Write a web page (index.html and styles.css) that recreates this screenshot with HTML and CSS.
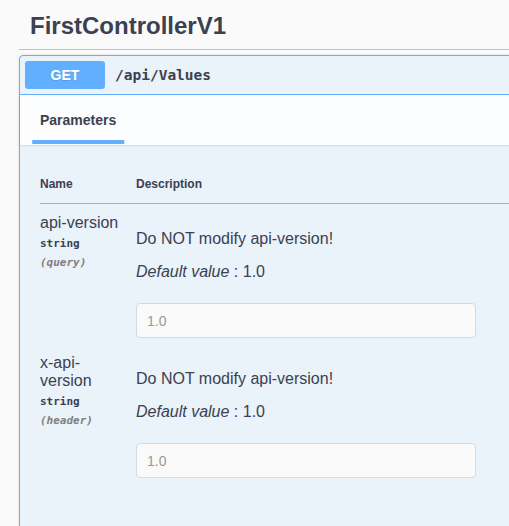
FILE: index.html
```html
<!DOCTYPE html>
<html lang="en">
<head>
<meta charset="utf-8">
<title>FirstControllerV1</title>
<link rel="stylesheet" href="styles.css">
</head>
<body>
<div class="wrapper">
  <div class="tag"><h3 class="tag-title">FirstControllerV1</h3></div>
  <div class="opblock">
    <div class="summary">
      <span class="method">GET</span>
      <span class="path">/api/Values</span>
    </div>
    <div class="section-header">
      <h4 class="tab"><span class="tab-label">Parameters</span></h4>
    </div>
    <div class="table-container">
      <table class="params">
        <thead>
          <tr><th class="col-name">Name</th><th class="col-desc">Description</th></tr>
        </thead>
        <tbody>
          <tr>
            <td class="col-name">
              <div class="p-name">api-version</div>
              <div class="p-type">string</div>
              <div class="p-in">(query)</div>
            </td>
            <td class="col-desc">
              <p class="desc">Do NOT modify api-version!</p>
              <p class="default"><i>Default value</i> : 1.0</p>
              <input class="p-input" type="text" value="1.0" disabled>
            </td>
          </tr>
          <tr>
            <td class="col-name">
              <div class="p-name">x-api-version</div>
              <div class="p-type">string</div>
              <div class="p-in">(header)</div>
            </td>
            <td class="col-desc">
              <p class="desc">Do NOT modify api-version!</p>
              <p class="default"><i>Default value</i> : 1.0</p>
              <input class="p-input" type="text" value="1.0" disabled>
            </td>
          </tr>
        </tbody>
      </table>
    </div>
  </div>
</div>
</body>
</html>
```

FILE: styles.css
```css
html, body {
  margin: 0;
  overflow: hidden;
}

body {
  background: #fafafa;
  font-family: "Liberation Sans", Arial, sans-serif;
  color: #3b4151;
}

.wrapper {
  width: 720px;
  padding: 0 0 0 19px;
}

.tag {
  padding: 11px 10px 8px 11px;
  border-bottom: 1px solid rgba(59, 65, 81, 0.3);
  margin-bottom: 5px;
}

.tag-title {
  margin: 0;
  font-size: 24px;
  line-height: 30px;
  font-weight: 700;
  color: #3b4151;
}

.opblock {
  border: 1px solid #61affe;
  border-radius: 4px;
  background: rgba(97, 175, 254, 0.1);
  box-shadow: 0 0 3px rgba(0, 0, 0, 0.12);
}

.summary {
  display: flex;
  align-items: center;
  padding: 5px;
  border-bottom: 1px solid #61affe;
}

.method {
  display: flex;
  align-items: center;
  justify-content: center;
  width: 80px;
  height: 28px;
  border-radius: 3px;
  background: #61affe;
  color: #fff;
  font-size: 14px;
  font-weight: 700;
  text-shadow: 0 1px 0 rgba(0, 0, 0, 0.1);
}

.path {
  margin-left: 10px;
  font-family: "DejaVu Sans Mono", "Liberation Mono", monospace;
  font-size: 14.5px;
  font-weight: 700;
  color: #3b4151;
}

.section-header {
  display: flex;
  align-items: center;
  box-sizing: border-box;
  min-height: 50px;
  padding: 0 20px;
  background: rgba(255, 255, 255, 0.8);
  box-shadow: 0 1px 2px rgba(0, 0, 0, 0.1);
}

.tab {
  margin: 0;
  font-size: 14px;
  line-height: 17px;
  font-weight: 700;
  color: #3b4151;
}

.tab-label {
  position: relative;
  display: inline-block;
}

.tab-label::after {
  content: "";
  position: absolute;
  left: 50%;
  bottom: -15px;
  width: 120%;
  height: 4px;
  transform: translateX(-50%);
  background: #61affe;
}

.table-container {
  padding: 20px 20px 80px;
}

.params {
  width: 100%;
  border-collapse: collapse;
}

.params th {
  text-align: left;
  padding: 12px 0;
  font-size: 12px;
  line-height: 14px;
  font-weight: 700;
  color: #3b4151;
  border-bottom: 1px solid rgba(59, 65, 81, 0.2);
}

.params td {
  vertical-align: top;
  padding: 10px 0 0;
}

.col-name {
  width: 86px;
  padding-right: 10px !important;
}

.p-name {
  font-size: 16px;
  line-height: 18px;
  color: #3b4151;
}

.p-type {
  padding: 5px 0;
  font-family: "DejaVu Sans Mono", "Liberation Mono", monospace;
  font-size: 11px;
  line-height: 14px;
  font-weight: 700;
  color: #3b4151;
}

.p-in {
  font-family: "DejaVu Sans Mono", "Liberation Mono", monospace;
  font-size: 11px;
  line-height: 14px;
  font-weight: 700;
  font-style: italic;
  color: #808080;
}

.desc {
  margin: 16px 0 0;
  font-size: 16px;
  line-height: 18px;
  color: #3b4151;
}

.default {
  margin: 15px 0 0;
  font-size: 16px;
  line-height: 18px;
  color: #3b4151;
}

.p-input {
  display: block;
  box-sizing: border-box;
  width: 340px;
  height: 35px;
  margin: 22px 0 6px;
  padding: 0 10px;
  border: 1px solid #d9d9d9;
  border-radius: 4px;
  background: #fafafa;
  color: #999;
  font-family: "Liberation Sans", Arial, sans-serif;
  font-size: 14px;
}
```
